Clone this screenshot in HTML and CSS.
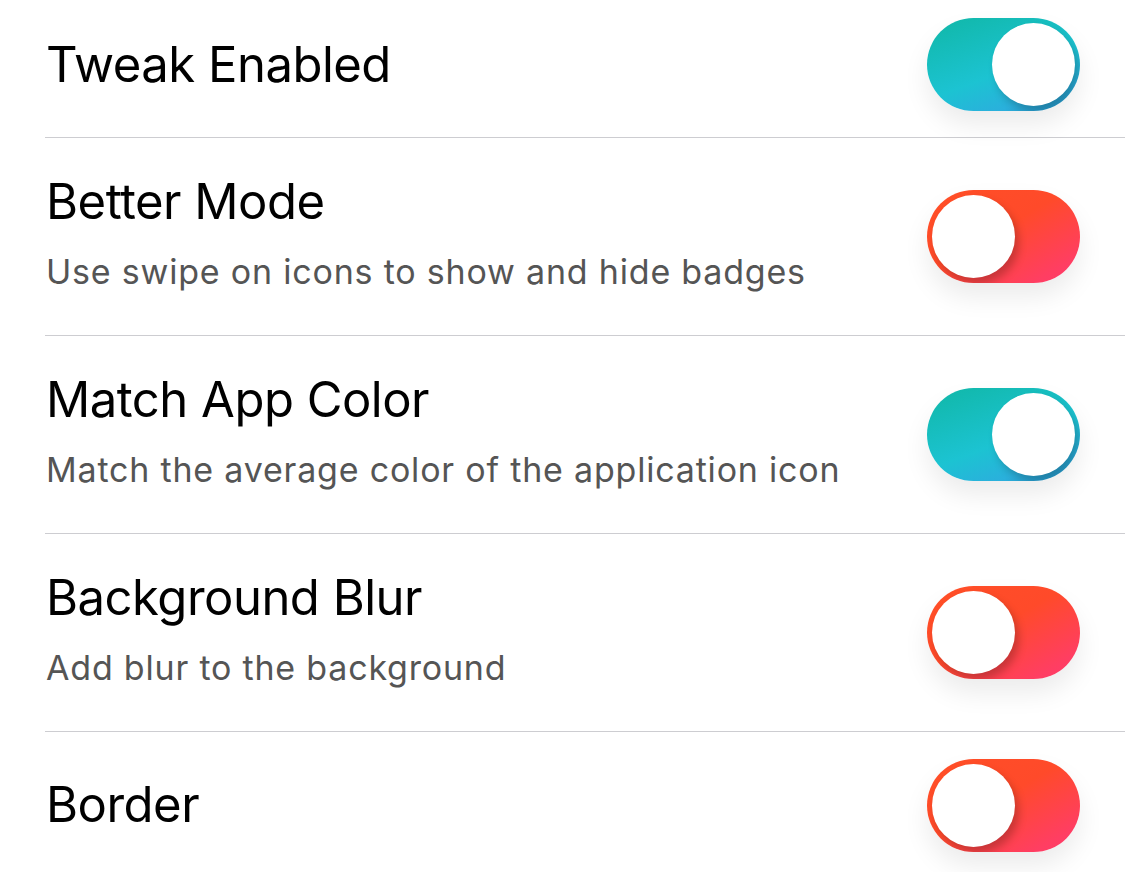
FILE: index.html
```html
<!DOCTYPE html>
<html>
<head>
<meta charset="utf-8">
<link rel="stylesheet" href="styles.css">
</head>
<body>
<div class="list">
  <div class="row row-first">
    <div class="text"><div class="title">Tweak Enabled</div></div>
    <div class="toggle on"><div class="knob"></div></div>
  </div>
  <div class="row row-sub">
    <div class="text">
      <div class="title">Better Mode</div>
      <div class="subtitle">Use swipe on icons to show and hide badges</div>
    </div>
    <div class="toggle off"><div class="knob"></div></div>
  </div>
  <div class="row row-sub">
    <div class="text">
      <div class="title">Match App Color</div>
      <div class="subtitle">Match the average color of the application icon</div>
    </div>
    <div class="toggle on"><div class="knob"></div></div>
  </div>
  <div class="row row-sub">
    <div class="text">
      <div class="title">Background Blur</div>
      <div class="subtitle">Add blur to the background</div>
    </div>
    <div class="toggle off"><div class="knob"></div></div>
  </div>
  <div class="row row-last">
    <div class="text"><div class="title">Border</div></div>
    <div class="toggle off"><div class="knob"></div></div>
  </div>
</div>
</body>
</html>
```
FILE: styles.css
```css
html, body {
  margin: 0;
  padding: 0;
  background: #ffffff;
  overflow: hidden;
}
body {
  font-family: "Inter", "Roboto", "Liberation Sans", sans-serif;
  color: #000;
}
.list {
  padding-left: 45px;
}
.row {
  display: flex;
  align-items: center;
  justify-content: space-between;
  padding-right: 45px;
  border-bottom: 1px solid #cdcdd1;
  box-sizing: border-box;
}
.row-first {
  height: 138px;
  padding-top: 18px;
  padding-bottom: 26px;
}
.row-sub {
  height: 198px;
}
.row-sub .text {
  margin-bottom: 10px;
}
.row-last {
  height: 146px;
  border-bottom: none;
}
.text {
  display: flex;
  flex-direction: column;
}
.title {
  font-size: 49px;
  line-height: 60px;
  letter-spacing: -0.5px;
  margin-left: 1px;
}
.subtitle {
  font-size: 34px;
  line-height: 40px;
  color: #555555;
  margin-top: 20px;
  margin-left: 1px;
  letter-spacing: 0.8px;
}
.toggle {
  width: 153px;
  height: 93px;
  border-radius: 47px;
  padding: 5px;
  box-sizing: border-box;
  display: flex;
  align-items: center;
  overflow: hidden;
  flex-shrink: 0;
  box-shadow: 0 14px 26px rgba(0, 0, 0, 0.08);
}
.toggle.on {
  justify-content: flex-end;
  background: linear-gradient(160deg, #10b7a6 0%, #1cc3d2 55%, #2ab0dc 80%, #2590c8 100%);
}
.toggle.off {
  justify-content: flex-start;
  background: linear-gradient(150deg, #ff4f26 0%, #ff4a2a 45%, #ff3e62 85%, #ff3a6e 100%);
}
.knob {
  width: 83px;
  height: 83px;
  border-radius: 50%;
  background: #ffffff;
  box-shadow: 4px 6px 9px rgba(0, 0, 0, 0.22);
}
```
